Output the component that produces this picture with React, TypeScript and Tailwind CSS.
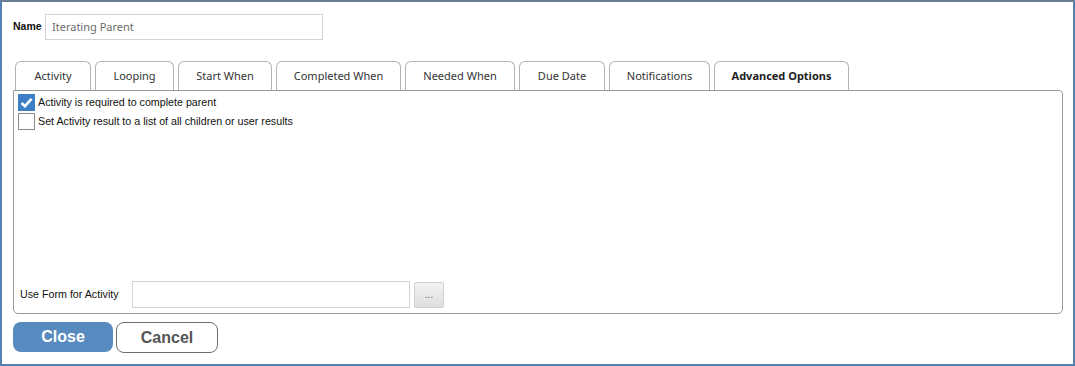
export default function App() {
  const tabs = [
    { label: "Activity", w: "w-[76px]" },
    { label: "Looping", w: "w-[79px]" },
    { label: "Start When", w: "w-[94px]" },
    { label: "Completed When", w: "w-[125px]" },
    { label: "Needed When", w: "w-[110px]" },
    { label: "Due Date", w: "w-[86px]" },
    { label: "Notifications", w: "w-[101px]" },
  ];

  return (
    <div className="w-[1075px] h-[366px] bg-white border-2 border-[#5482b4] border-t-[#6b7d90] font-['Liberation_Sans',Arial,sans-serif] text-[#222] overflow-hidden">
      <div className="pl-[11px] pr-[10px] pt-[12px] flex flex-col">
        {/* name row */}
        <div className="flex items-center h-[26px]">
          <span className="text-[10.5px] font-bold text-[#111] w-[32px]">Name</span>
          <div className="w-[278px] h-[26px] border border-[#d4d4d4] flex items-center pl-[6px] text-[11px] text-[#6b6b6b] font-['Noto_Sans',sans-serif]">
            Iterating Parent
          </div>
        </div>

        {/* tabs */}
        <div className="flex gap-[4px] ml-[2px] mt-[21px] h-[29px]">
          {tabs.map((t) => (
            <div
              key={t.label}
              className={`${t.w} h-[29px] border border-b-0 border-[#b3b3b3] rounded-t-[6px] flex items-center justify-center text-[11px] text-[#333] font-['Noto_Sans',sans-serif]`}
            >
              {t.label}
            </div>
          ))}
          <div className="w-[135px] h-[29px] border border-b-0 border-[#b3b3b3] rounded-t-[6px] flex items-center justify-center text-[11px] font-bold text-[#222] font-['Noto_Sans',sans-serif]">
            Advanced Options
          </div>
        </div>

        {/* panel */}
        <div className="w-[1050px] h-[224px] border border-[#9a9a9a] rounded-b-[5px] rounded-tr-[4px] flex flex-col">
          <div className="flex flex-col pl-[4px] pt-[3px] gap-[2px]">
            <label className="flex items-center gap-[3px] h-[17px]">
              <span className="w-[17px] h-[17px] bg-[#3d7fc5] flex items-center justify-center">
                <svg width="13" height="11" viewBox="0 0 13 11">
                  <path d="M1.5 6 L5 9.2 L11.5 1.8" stroke="#fff" strokeWidth="2.6" fill="none" />
                </svg>
              </span>
              <span className="text-[10.7px] text-[#111]">Activity is required to complete parent</span>
            </label>
            <label className="flex items-center gap-[3px] h-[17px]">
              <span className="w-[17px] h-[17px] border border-[#8a8a8a] bg-white" />
              <span className="text-[10.7px] text-[#111]">Set Activity result to a list of all children or user results</span>
            </label>
          </div>

          <div className="mt-auto mb-[5px] flex items-center pl-[6px]">
            <span className="text-[10.7px] text-[#111] w-[112px]">Use Form for Activity</span>
            <div className="w-[278px] h-[27px] border border-[#d4d4d4]" />
            <button className="ml-[4px] w-[30px] h-[26px] mt-[2px] rounded-[2px] border border-[#d0d0d0] bg-gradient-to-b from-[#f2f2f2] to-[#dedede] text-[10px] text-[#556] leading-none flex items-center justify-center">
              ...
            </button>
          </div>
        </div>

        {/* buttons */}
        <div className="flex gap-[3px] mt-[8px]">
          <button className="w-[100px] h-[30px] rounded-[8px] bg-[#578bbf] text-white text-[16px] font-bold">
            Close
          </button>
          <button className="w-[102px] h-[31px] rounded-[8px] border border-[#6e6e6e] bg-white text-[#555] text-[16px] font-bold">
            Cancel
          </button>
        </div>
      </div>
    </div>
  );
}
